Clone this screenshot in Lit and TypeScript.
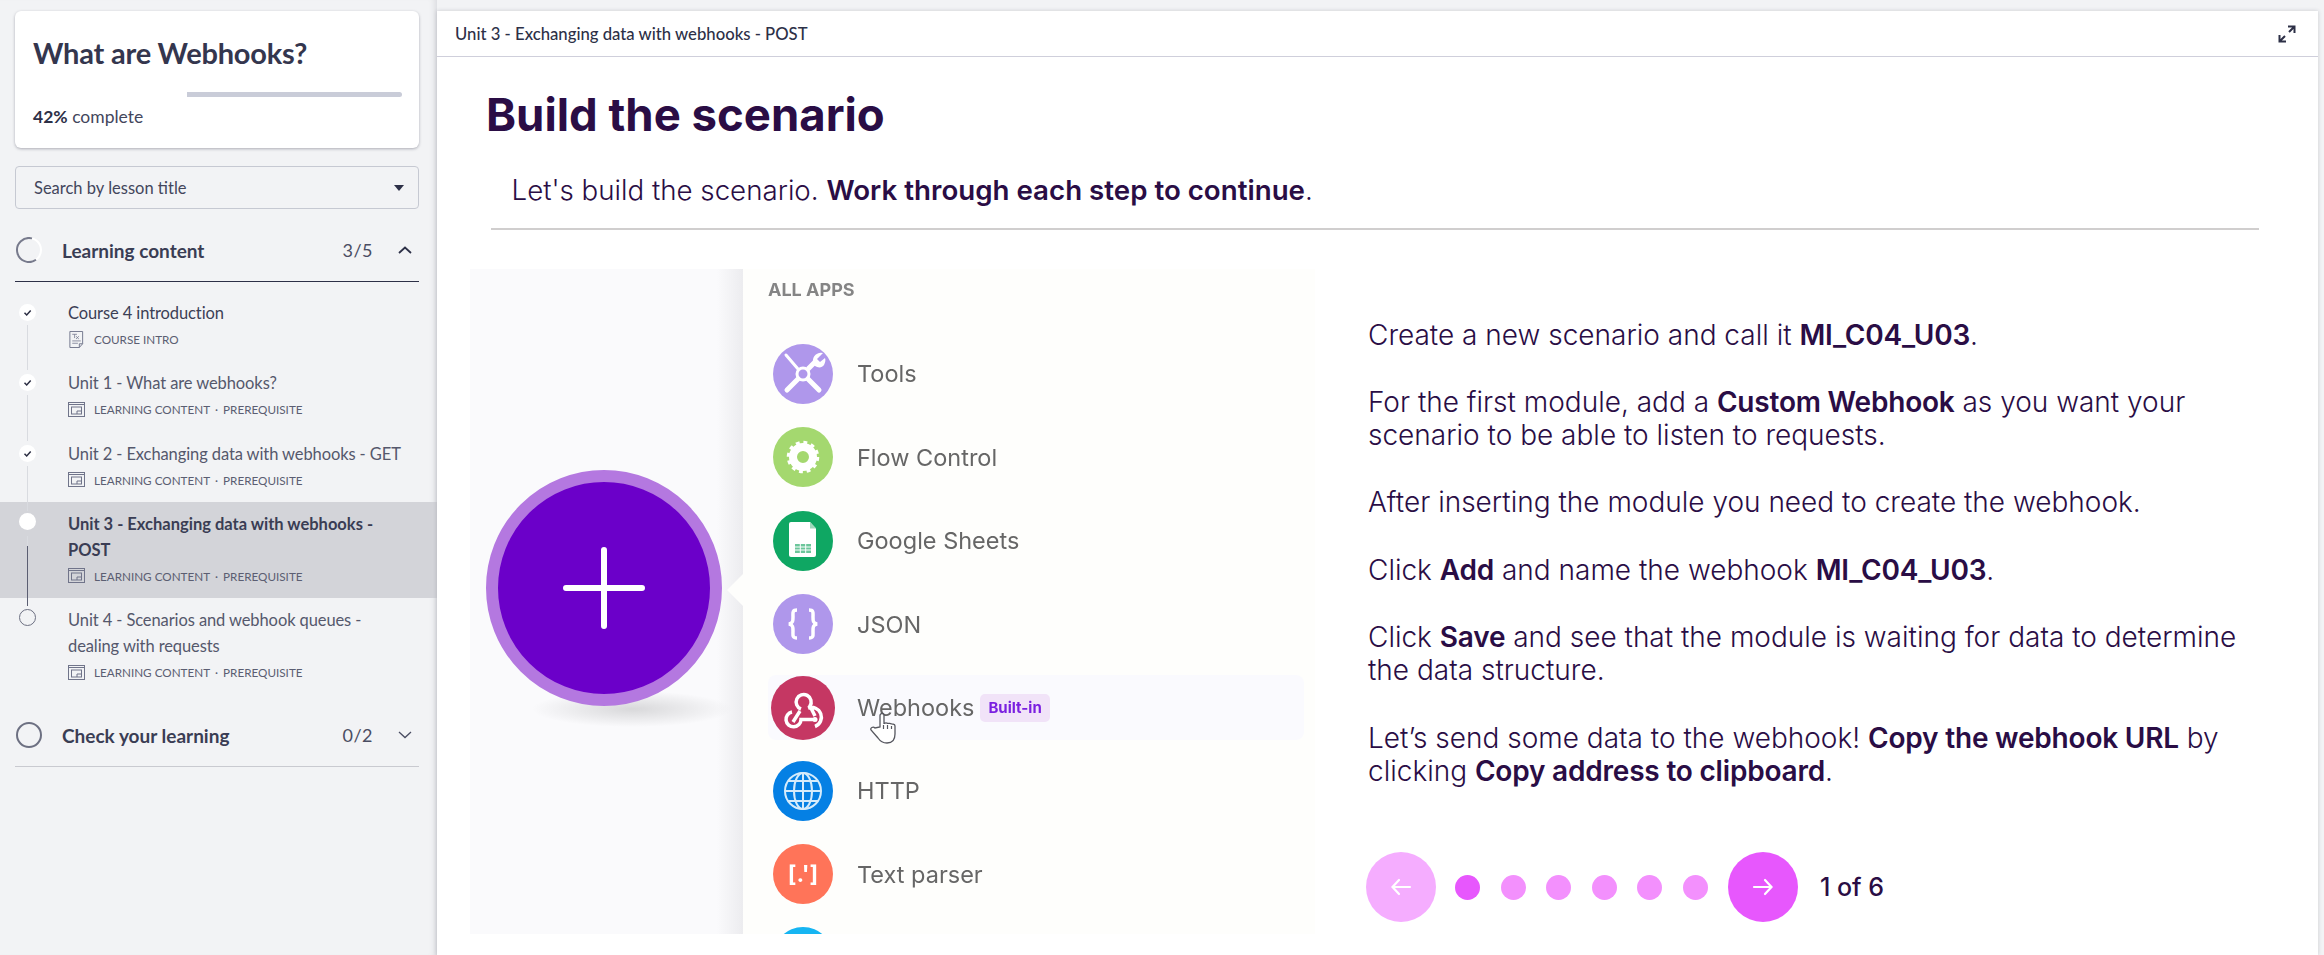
import {LitElement, html, css, svg} from 'lit';
import {customElement} from 'lit/decorators.js';

type Lesson = {
  title: string;
  kind: 'intro' | 'content';
  state: 'done' | 'current' | 'todo';
  line?: 'light' | 'mixed';
};

const lessons: Lesson[] = [
  {title: 'Course 4 introduction', kind: 'intro', state: 'done', line: 'light'},
  {title: 'Unit 1 - What are webhooks?', kind: 'content', state: 'done', line: 'light'},
  {title: 'Unit 2 - Exchanging data with webhooks - GET', kind: 'content', state: 'done', line: 'light'},
  {title: 'Unit 3 - Exchanging data with webhooks - POST', kind: 'content', state: 'current', line: 'mixed'},
  {title: 'Unit 4 - Scenarios and webhook queues - dealing with requests', kind: 'content', state: 'todo'},
];

const docIcon = html`<svg class="kind" viewBox="0 0 17 18" fill="none" stroke="#70748a" stroke-width="1">
  <path d="M1.5.5h13.5v13l-3.5 4H1.5z" />
  <path d="M15 13.5h-3.5v4" />
  <path d="M4 3.5h5M6.5 3.500v4M8 5.500l3 3M11 5.500l-3 3M4 10.500h9M4 13h6" stroke-width=".8" />
</svg>`;

const contentIcon = html`<svg class="kind" viewBox="0 0 17 15" fill="none" stroke="#70748a" stroke-width="1">
  <rect x=".5" y=".5" width="16" height="14" />
  <path d="M.5 2.500h16" />
  <rect x="3.500" y="5" width="10" height="7" />
  <path d="M9 12v-3h4.500" />
</svg>`;

@customElement('course-sidebar')
export class CourseSidebar extends LitElement {
  private marker(l: Lesson) {
    if (l.state === 'done') {
      return html`<span class="dot"><svg viewBox="0 0 17 17" fill="none" stroke="#2b2d42" stroke-width="1.500">
        <path d="M5.500 8.800l2.200 2.200 4-4.500" />
      </svg></span>`;
    }
    return html`<span class="dot ${l.state}"></span>`;
  }

  private lesson(l: Lesson) {
    return html`
      <li class="lesson ${l.state}">
        <div class="track">
          ${this.marker(l)}
          ${l.line ? html`<span class="line ${l.line}"></span>` : ''}
        </div>
        <div class="body">
          <div class="name">${l.title}</div>
          <div class="meta">
            ${l.kind === 'intro' ? docIcon : contentIcon}
            ${l.kind === 'intro'
              ? html`<span>COURSE INTRO</span>`
              : html`<span>LEARNING CONTENT</span><span class="sep">·</span><span>PREREQUISITE</span>`}
          </div>
        </div>
      </li>
    `;
  }

  render() {
    return html`
      <section class="summary">
        <h2>What are Webhooks?</h2>
        <div class="bar"></div>
        <p><b>42%</b> complete</p>
      </section>
      <div class="search">
        <span>Search by lesson title</span>
        <i class="caret"></i>
      </div>
      <header class="group open">
        <svg class="ring" viewBox="0 0 26 26" fill="none" stroke-width="2">
          <circle cx="13" cy="13" r="12" stroke="#fff" />
          <path d="M16 1.400A12 12 0 1 0 20 22.800" stroke="#777a8c" />
        </svg>
        <span class="label">Learning content</span>
        <span class="count">3/5</span>
        <svg class="chev" viewBox="0 0 14 8" fill="none" stroke="#2d3047" stroke-width="1.800">
          <path d="M1 7l6-5.500 6 5.500" />
        </svg>
      </header>
      <ul>${lessons.map((l) => this.lesson(l))}</ul>
      <header class="group">
        <svg class="ring" viewBox="0 0 26 26" fill="none" stroke-width="2">
          <circle cx="13" cy="13" r="12" stroke="#6d7082" />
        </svg>
        <span class="label">Check your learning</span>
        <span class="count">0/2</span>
        <svg class="chev" viewBox="0 0 14 8" fill="none" stroke="#4a4d62" stroke-width="1.300">
          <path d="M1 1l6 5.500 6-5.500" />
        </svg>
      </header>
    `;
  }

  static styles = css`
    :host {
      display: block;
      box-sizing: border-box;
      width: 437px;
      flex: none;
      padding-top: 11px;
      background: #f2f3f5;
      color: #2d3047;
      font-family: 'Lato', 'Noto Sans', sans-serif;
      font-size: 16.500px;
      box-shadow: inset -7px 0 6px -5px #d8d9dd;
    }
    .summary {
      box-sizing: border-box;
      height: 137px;
      margin: 0 18px 18px 15px;
      padding: 21px 17px 0 18px;
      background: #fff;
      border-radius: 6px;
      box-shadow: 0 1px 3px rgba(40, 40, 60, 0.35);
    }
    h2 {
      margin: 0;
      height: 42px;
      font-size: 29px;
      line-height: 42px;
      font-weight: 700;
      letter-spacing: -0.2px;
      color: #34364e;
    }
    .bar {
      height: 5px;
      margin: 18px 0 0 154px;
      background: #c9ccd8;
      border-radius: 0 3px 3px 0;
    }
    p {
      margin: 8px 0 0;
      font-size: 17.500px;
      line-height: 24px;
      color: #43465c;
    }
    p b {
      font-weight: 700;
      color: #2d3047;
    }
    .search {
      box-sizing: border-box;
      height: 43px;
      margin: 0 18px 10px 15px;
      padding: 0 14px 0 18px;
      border: 1px solid #c6c9d2;
      border-radius: 4px;
      display: flex;
      align-items: center;
      justify-content: space-between;
      color: #43465c;
    }
    .caret {
      width: 0;
      height: 0;
      border: 5px solid transparent;
      border-top: 6px solid #2d3047;
      border-bottom: 0;
    }
    .group {
      box-sizing: content-box;
      height: 62px;
      margin: 10px 18px 0 15px;
      display: flex;
      align-items: center;
      border-bottom: 1px solid #c9cad0;
    }
    .group.open {
      margin-top: 0;
      border-bottom-color: #2d3047;
    }
    .ring {
      width: 26px;
      height: 26px;
      margin-left: 1px;
    }
    .label {
      margin-left: 20px;
      flex: 1;
      font-size: 19px;
      font-weight: 700;
      color: #3a3d54;
    }
    .count {
      font-size: 18px;
      color: #4a4d62;
      letter-spacing: 0.500px;
    }
    .chev {
      width: 14px;
      height: 8px;
      margin: 0 7px 0 25px;
    }
    ul {
      list-style: none;
      margin: 0;
      padding: 9px 0 0;
    }
    .lesson {
      display: flex;
      padding-left: 19px;
    }
    .lesson.current {
      background: #d3d4d9;
    }
    .track {
      width: 17px;
      flex: none;
      display: flex;
      flex-direction: column;
      align-items: center;
      padding-top: 13px;
    }
    .dot {
      box-sizing: border-box;
      width: 17px;
      height: 17px;
      flex: none;
      border-radius: 50%;
      background: #fff;
    }
    .dot svg {
      display: block;
    }
    .dot.current {
      margin-top: -2px;
    }
    .dot.todo {
      background: none;
      border: 1px solid #6d7082;
      margin-top: -2px;
    }
    .line {
      position: relative;
      z-index: 1;
      flex: 1;
      width: 1px;
      margin: 4px 0 -9px;
      background: #d9dbe0;
    }
    .line.mixed {
      margin-top: 6px;
      background: linear-gradient(#d9dbe0 10px, #5b5e72 10px);
      margin-bottom: -8px;
    }
    .body {
      margin-left: 32px;
      padding: 9px 32px 12.300px 0;
      flex: 1;
    }
    .name {
      line-height: 26px;
      color: #55586c;
      letter-spacing: -0.100px;
    }
    .current .name {
      font-weight: 700;
      color: #3a3d54;
      letter-spacing: 0;
    }
    .lesson:first-child .name {
      color: #3c3f55;
    }
    .meta {
      display: flex;
      align-items: center;
      height: 20px;
      margin-top: 3px;
      font-size: 11.700px;
      color: #5b5e72;
      white-space: nowrap;
    }
    .kind {
      width: 17px;
      height: 17px;
      flex: none;
      margin-right: 9px;
    }
    .sep {
      margin: 0 5px;
    }
  `;
}

const appRows = [
  {name: 'Tools', color: 'purple'},
  {name: 'Flow Control', color: 'green'},
  {name: 'Google Sheets', color: 'sheets'},
  {name: 'JSON', color: 'purple'},
  {name: 'Webhooks', color: 'hook'},
  {name: 'HTTP', color: 'blue'},
  {name: 'Text parser', color: 'coral'},
];

const appGlyphs: Record<string, unknown> = {
  Tools: svg`
    <g stroke="#fff" fill="none">
      <path d="M13 11l12 14" stroke-width="3" stroke-linecap="round" />
      <path d="M35 35l11 11M25 35L14 46M35.500 24.500L42 18" stroke-width="5" stroke-linecap="round" />
      <circle cx="30" cy="30" r="6" stroke-width="3" />
      <path d="M50 9a8 8 0 0 0-10 9c0 2 1 3 2 4 3 2 7 2 9-1 1-2 2-5 1-7l-5 4-3-3z" fill="#fff" stroke="none" />
    </g>`,
  'Flow Control': svg`
    <g fill="none" stroke="#fff">
      <circle cx="30" cy="30" r="10" stroke-width="8" />
      <circle cx="30" cy="30" r="14.500" stroke-width="3.500" stroke-dasharray="3.800 3.790" />
    </g>`,
  'Google Sheets': svg`
    <path d="M18 11h19l6 6.500V44a2 2 0 0 1-2 2H18a2 2 0 0 1-2-2V13a2 2 0 0 1 2-2z" fill="#fff" />
    <path d="M37 11l6 6.500h-6z" fill="#9ed8bb" />
    <path d="M22 33h16v9H22z" fill="#6cc69b" />
    <path d="M22 36h16M22 39h16M27.300 33v9M32.700 33v9" stroke="#fff" stroke-width="1" />`,
  JSON: svg`
    <path d="M24 16c-5 0-4 3-4 7 0 4 0 6-4 7 4 1 4 3 4 7 0 4-1 7 4 7M36 16c5 0 4 3 4 7 0 4 0 6 4 7-4 1-4 3-4 7 0 4 1 7-4 7"
      fill="none" stroke="#fff" stroke-width="3.500" />`,
  Webhooks: svg`
    <g fill="none" stroke="#fff" stroke-width="3.500">
      <path d="M27 33l-7 11M19 34a7.500 7.500 0 1 0 9 7.500h14M35 30a7.500 7.500 0 1 1 7 18.500M28 31a7.500 7.500 0 1 1 9-3l5 10" />
    </g>
    <circle cx="42" cy="41.500" r="2.500" fill="#fff" />`,
  HTTP: svg`
    <g fill="none" stroke="#d5ebfb" stroke-width="2">
      <circle cx="30" cy="30" r="18" />
      <ellipse cx="30" cy="30" rx="9" ry="18" />
      <path d="M30 12v36M12 30h36M15 20h30M15 40h30" />
    </g>`,
};

const expandIcon = html`<svg class="expand" viewBox="0 0 18 18" fill="none" stroke="#2d3047" stroke-width="2">
  <path d="M10 1.500h6.500V8M16.500 1.500l-5.500 5.500M8 16.500H1.500V10M1.500 16.500L7 11" />
</svg>`;

@customElement('app-root')
export class AppRoot extends LitElement {
  private appRow(a: {name: string; color: string}) {
    return html`
      <div class="app ${a.name === 'Webhooks' ? 'hover' : ''}">
        <span class="badge ${a.color}">
          ${a.name === 'Text parser'
            ? html`<span class="glyph">[.']</span>`
            : html`<svg viewBox="0 0 60 60">${appGlyphs[a.name]}</svg>`}
        </span>
        <span class="app-name">${a.name}</span>
        ${a.name === 'Webhooks' ? html`<span class="tag">Built-in</span>` : ''}
      </div>
    `;
  }

  private picture() {
    return html`
      <figure class="picture">
        <div class="canvas"></div>
        <div class="apps">
          <div class="all">ALL APPS</div>
          ${appRows.map((a) => this.appRow(a))}
          <span class="peek"></span>
        </div>
        <span class="notch"></span>
        <span class="floor"></span>
        <span class="plus">
          <svg viewBox="0 0 82 82" stroke="#fff" stroke-width="6" stroke-linecap="round">
            <path d="M41 3v76M3 41h76" />
          </svg>
        </span>
        <svg class="cursor" viewBox="0 0 26 32">
          <path d="M10 15V3.500a2 2 0 0 1 4 0V12c0-1.500 4-1.500 4 0 0-1 3.500-1 3.500.500 0-.700 3.500-.700 3.500 1.500v8c0 5-2 9-8 9-5 0-7-2-9-5l-7-8c-1-2 2-4 4-2z"
            fill="#fff" stroke="#55565e" stroke-width="1.300" />
          <path d="M13.500 17v-4M17.500 17v-4M21.500 17v-3" stroke="#55565e" stroke-width="1.200" />
        </svg>
      </figure>
    `;
  }

  render() {
    return html`
      <course-sidebar></course-sidebar>
      <main>
        <div class="topbar">
          <span>Unit 3 - Exchanging data with webhooks - POST</span>
          ${expandIcon}
        </div>
        <h1>Build the scenario</h1>
        <div class="lede">Let's build the scenario. <b>Work through each step to continue</b>.</div>
        <hr />
        <div class="step">
          ${this.picture()}
          <div class="copy">
            <div class="text">
              <p>Create a new scenario and call it <b>MI_C04_U03</b>.</p>
              <p>For the first module, add a <b>Custom Webhook</b> as you want your<br />scenario to be able to listen to requests.</p>
              <p>After inserting the module you need to create the webhook.</p>
              <p>Click <b>Add</b> and name the webhook <b>MI_C04_U03</b>.</p>
              <p>Click <b>Save</b> and see that the module is waiting for data to determine<br />the data structure.</p>
              <p>Let’s send some data to the webhook! <b>Copy the webhook URL</b> by<br />clicking <b>Copy address to clipboard</b>.</p>
            </div>
            <div class="pager">
              <span class="nav prev">
                <svg viewBox="0 0 22 18" fill="none" stroke="#fff" stroke-width="2.200" stroke-linecap="round">
                  <path d="M20 9H3M9 2L2.500 9 9 16" />
                </svg>
              </span>
              <div class="dots">
                ${[0, 1, 2, 3, 4, 5].map((i) => html`<i class="${i === 0 ? 'on' : ''}"></i>`)}
              </div>
              <span class="nav next">
                <svg viewBox="0 0 22 18" fill="none" stroke="#fff" stroke-width="2.200" stroke-linecap="round">
                  <path d="M2 9h17M13 2l6.500 7-6.500 7" />
                </svg>
              </span>
              <span class="of">1 of 6</span>
            </div>
          </div>
        </div>
      </main>
    `;
  }

  static styles = css`
    :host {
      display: flex;
      width: 2324px;
      height: 955px;
      overflow: hidden;
      background: #f2f3f5;
    }
    main {
      flex: 1;
      min-width: 0;
      margin: 11px 6px 0 0;
      background: #fff;
      color: #2a0d45;
      font-family: 'Inter', sans-serif;
      box-shadow: 0 0 4px rgba(40, 40, 60, 0.2);
    }
    .topbar {
      box-sizing: border-box;
      height: 46px;
      padding: 0 22px 0 18px;
      display: flex;
      align-items: center;
      justify-content: space-between;
      border-bottom: 1px solid #cfcfdb;
      color: #2d3047;
      font-family: 'Lato', 'Noto Sans', sans-serif;
      font-size: 16.700px;
      font-weight: 500;
    }
    .expand {
      width: 18px;
      height: 18px;
    }
    h1 {
      margin: 30px 0 0 49px;
      font-size: 45.500px;
      line-height: 56px;
      font-weight: 700;
    }
    .lede {
      margin: 28.500px 0 0 74.500px;
      font-size: 27.700px;
      line-height: 36px;
      font-weight: 300;
    }
    b {
      font-weight: 600;
    }
    hr {
      margin: 20.500px 59px 0 54px;
      border: 0;
      height: 2px;
      background: #d0cece;
    }
    .step {
      display: flex;
      margin: 39px 0 0 33px;
    }
    .picture {
      position: relative;
      flex: none;
      display: flex;
      width: 845px;
      height: 665px;
      margin: 0;
      filter: blur(0.500px);
    }
    .canvas {
      width: 273px;
      flex: none;
      background: linear-gradient(90deg, #fafafc 247px, #ececef);
    }
    .apps {
      flex: 1;
      padding: 0 11px 0 25px;
      background: #fefefc;
      overflow: hidden;
    }
    .all {
      height: 63px;
      line-height: 42px;
      font-size: 18px;
      font-weight: 700;
      color: #858585;
    }
    .app {
      display: flex;
      align-items: center;
      height: 83.500px;
      padding-left: 5px;
      font-size: 23.500px;
      color: #666;
    }
    .app.hover {
      height: 65px;
      margin: 9px 0;
      background: #fafafe;
      border-radius: 8px;
    }
    .badge {
      box-sizing: border-box;
      width: 60px;
      height: 60px;
      flex: none;
      border-radius: 50%;
      display: flex;
      align-items: center;
      justify-content: center;
    }
    .badge svg {
      width: 60px;
      height: 60px;
    }
    .purple {
      background: #af97eb;
    }
    .green {
      background: #a4d86f;
    }
    .sheets {
      background: #0fa763;
    }
    .hook {
      width: 64px;
      height: 64px;
      margin-left: -2px;
      background: #c53763;
    }
    .blue {
      background: #0580e4;
    }
    .coral {
      background: #ff7459;
    }
    .glyph {
      color: #fff;
      font-size: 23px;
      font-weight: 700;
    }
    .app-name {
      margin-left: 24px;
    }
    .hook + .app-name {
      margin-left: 22px;
    }
    .tag {
      margin-left: 6px;
      padding: 0 8px;
      height: 28px;
      line-height: 28px;
      border-radius: 5px;
      background: #f1e3f8;
      color: #7a1fe0;
      font-size: 15px;
      font-weight: 700;
    }
    .peek {
      display: block;
      width: 60px;
      height: 60px;
      margin: 11px 0 0 5px;
      border-radius: 50%;
      background: #16b5f2;
    }
    .notch {
      position: absolute;
      left: 257px;
      top: 303px;
      width: 36px;
      height: 36px;
      background: #fefefc;
      clip-path: polygon(50% 0, 100% 0, 100% 100%, 50% 100%, 0 50%);
    }
    .floor {
      position: absolute;
      left: 62px;
      top: 422px;
      width: 200px;
      height: 36px;
      border-radius: 50%;
      background: radial-gradient(closest-side, #d8d8da, rgba(216, 216, 218, 0));
    }
    .plus {
      position: absolute;
      left: 16px;
      top: 201px;
      box-sizing: border-box;
      width: 236px;
      height: 236px;
      border-radius: 50%;
      border: 12px solid #b478e0;
      background: #6b00c9;
      display: flex;
      align-items: center;
      justify-content: center;
    }
    .plus svg {
      width: 82px;
      height: 82px;
    }
    .cursor {
      position: absolute;
      left: 400px;
      top: 443px;
      width: 26px;
      height: 32px;
    }
    .copy {
      margin-left: 53px;
      flex: 1;
    }
    .text {
      margin-top: 49.500px;
      font-size: 28px;
      line-height: 33.600px;
      font-weight: 300;
      white-space: nowrap;
    }
    .text p {
      margin: 0 0 33.600px;
      font: inherit;
      color: inherit;
    }
    .text p:last-child {
      margin-bottom: 0;
    }
    .text b {
      font-weight: 600;
      color: inherit;
      letter-spacing: -0.200px;
    }
    .pager {
      display: flex;
      align-items: center;
      margin-top: 63.500px;
      margin-left: -2px;
    }
    .nav {
      width: 70px;
      height: 70px;
      flex: none;
      border-radius: 50%;
      display: flex;
      align-items: center;
      justify-content: center;
    }
    .nav svg {
      width: 22px;
      height: 18px;
    }
    .prev {
      background: #f5adff;
    }
    .next {
      background: #e757fd;
    }
    .dots {
      display: flex;
      gap: 20.600px;
      margin: 0 20px 0 19px;
    }
    .dots i {
      width: 25px;
      height: 25px;
      border-radius: 50%;
      background: #f390fd;
    }
    .dots i.on {
      background: #e757fd;
    }
    .of {
      margin-left: 22px;
      font-size: 25px;
      font-weight: 500;
    }
  `;
}
